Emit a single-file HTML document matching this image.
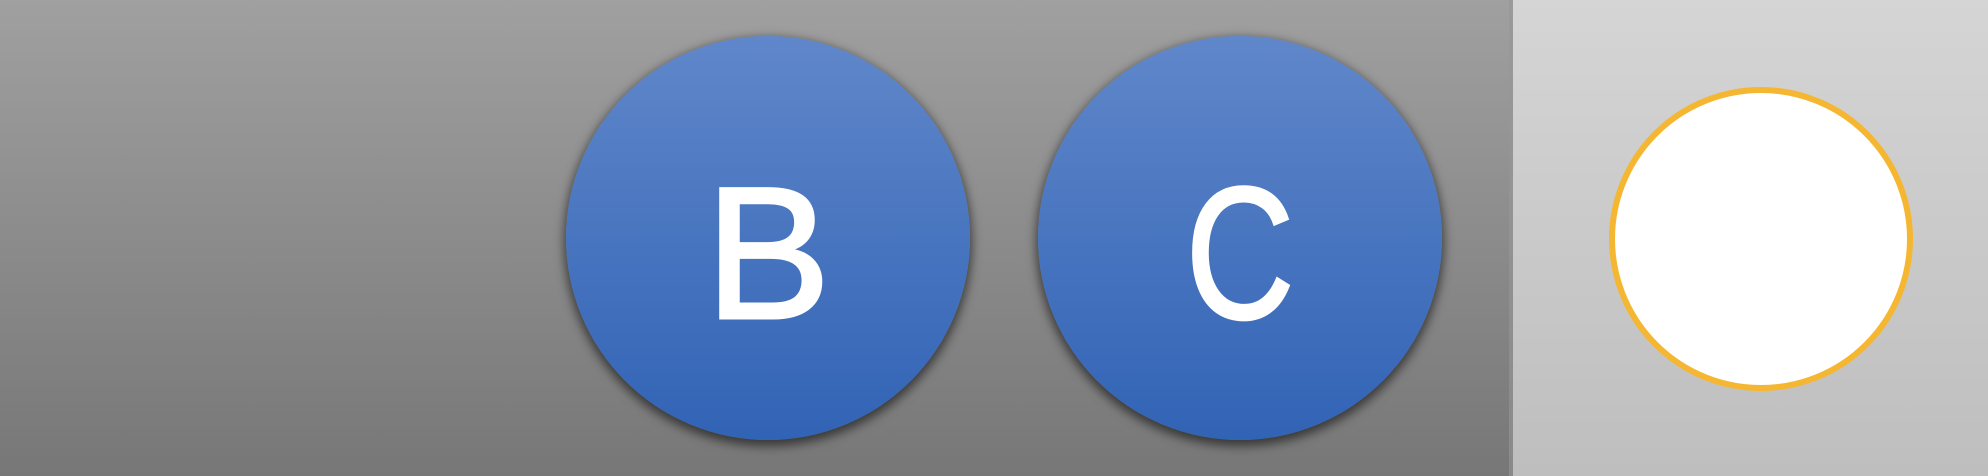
<!DOCTYPE html>
<html><head><style>
html,body{margin:0;padding:0}
body{width:1988px;height:476px;position:relative;overflow:hidden;font-family:"Liberation Sans",sans-serif}
.left{position:absolute;left:0;top:0;width:1509px;height:476px;background:linear-gradient(#a0a0a0,#777)}
.div{position:absolute;left:1509px;top:0;width:4px;height:476px;background:linear-gradient(#9a9a9a,#8a8a8a)}
.right{position:absolute;left:1513px;top:0;width:475px;height:476px;background:linear-gradient(#d5d5d5,#bebebe)}
.c{position:absolute;width:404px;height:404px;border-radius:50%;top:36px;background:linear-gradient(#6087ca,#3163b5);box-shadow:0 4px 10px 2px rgba(0,0,0,.55)}
.c span{position:absolute;left:0;right:0;top:15px;text-align:center;color:#fff;font-size:188px;line-height:404px;-webkit-text-stroke:3px #fff}
.w{position:absolute;left:1609px;top:87px;width:292px;height:292px;border:6px solid #f5b731;border-radius:50%;background:#fff}
</style></head><body>
<div class="left"></div><div class="div"></div><div class="right"></div>
<div class="c" style="left:566px"><span>B</span></div>
<div class="c" style="left:1038px"><span style="transform:scaleX(0.8)">C</span></div>
<div class="w"></div>
</body></html>
